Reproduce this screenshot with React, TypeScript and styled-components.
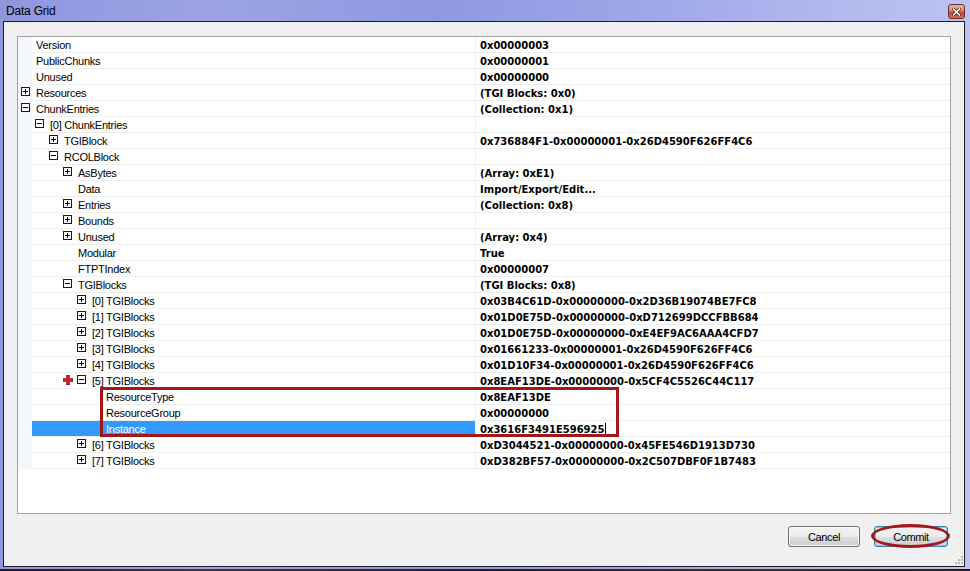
import React from 'react';
import styled, { createGlobalStyle } from 'styled-components';

const GlobalStyle = createGlobalStyle`
  html, body { margin: 0; padding: 0; background: #262626; overflow: hidden; }
  #root { width: 970px; height: 571px; }
  * { box-sizing: border-box; }
`;

const Page = styled.div`
  width: 970px;
  height: 571px;
  display: flex;
  flex-direction: column;
`;

const Window = styled.div`
  height: 569px;
  flex: none;
  display: flex;
  flex-direction: column;
  background: linear-gradient(to right, #8e97de 0%, #9ca4e5 22%, #8f99e0 45%, #9da6e8 65%, #b0b8ee 85%, #bcc3f1 100%);
`;

const TitleBar = styled.div`
  height: 21px;
  flex: none;
  display: flex;
  align-items: center;
  justify-content: space-between;
  padding: 0 5px 0 6px;
`;

const Title = styled.span`
  font-family: "Liberation Sans", Arial, sans-serif;
  font-size: 12px;
  letter-spacing: -0.2px;
  color: #000;
`;

const CloseButton = styled.div`
  width: 17px;
  height: 15px;
  margin-top: 2px;
  border: 1px solid #6b3330;
  border-radius: 3px;
  background: linear-gradient(#eab0a0 0%, #dc8a72 45%, #c9452c 55%, #d56a4b 100%);
  display: flex;
  align-items: center;
  justify-content: center;
`;

const Client = styled.div`
  flex: 1;
  margin: 0 5px 2px 3px;
  border: 1px solid #1c1c1c;
  background: #f0f0f0;
  display: flex;
  flex-direction: column;
  padding: 14px 13px 0 13px;
  position: relative;
`;

const GridBox = styled.div`
  height: 478px;
  flex: none;
  border: 1px solid #a0a0a0;
  background: #fff;
  position: relative;
  display: flex;
  flex-direction: column;
`;

const Row = styled.div`
  height: 16px;
  display: flex;
  flex: none;
`;

const Gutter = styled.div`
  width: 14px;
  flex: none;
  background: #f4f7fc;
  padding: 2px 0 0 3px;
`;

const NameCell = styled.div<{ $pad: number; $selected?: boolean }>`
  width: 444px;
  flex: none;
  display: flex;
  align-items: flex-start;
  padding: 2px 0 0 ${(p) => p.$pad}px;
  border-right: 1px solid #f0f0f0;
  border-bottom: 1px solid #f0f0f0;
  background: ${(p) => (p.$selected ? '#3399ff' : '#fff')};
  color: ${(p) => (p.$selected ? '#fff' : '#000')};
  font-family: "Liberation Sans", Arial, sans-serif;
  font-size: 11px;
  letter-spacing: -0.25px;
  line-height: 13px;
  white-space: nowrap;
`;

const ExpanderBox = styled.svg`
  flex: none;
  display: block;
  margin-right: 6px;
`;

const ValueCell = styled.div`
  flex: 1;
  display: flex;
  align-items: flex-start;
  padding: 2px 0 0 4px;
  border-bottom: 1px solid #f0f0f0;
  font-family: "DejaVu Sans", Verdana, sans-serif;
  font-weight: bold;
  font-size: 10px;
  line-height: 13px;
  color: #000;
  white-space: nowrap;
`;

const Caret = styled.span`
  display: inline-block;
  width: 1px;
  height: 13px;
  margin-left: 1px;
  background: #000;
`;

const HighlightBox = styled.div`
  position: absolute;
  left: 82px;
  top: 350px;
  width: 519px;
  height: 50px;
  border: 3px solid #a3171b;
  pointer-events: none;
`;

const RedPlus = styled.svg`
  position: absolute;
  left: 45px;
  top: 338px;
`;

const ButtonRow = styled.div`
  display: flex;
  justify-content: flex-end;
  gap: 14px;
  margin-top: 12px;
  padding-right: 3px;
`;

const ButtonWrap = styled.div`
  position: relative;
`;

const Button = styled.div<{ $width: number; $default?: boolean }>`
  width: ${(p) => p.$width}px;
  height: 21px;
  border: 1px solid ${(p) => (p.$default ? '#3c7fb1' : '#707070')};
  border-radius: 3px;
  background: linear-gradient(#f2f2f2 0%, #ebebeb 50%, #dddddd 51%, #cfcfcf 100%);
  box-shadow: inset 0 0 0 1px ${(p) => (p.$default ? '#5fd4f4' : 'rgba(255,255,255,0.75)')};
  display: flex;
  align-items: center;
  justify-content: center;
  font-family: "Liberation Sans", Arial, sans-serif;
  font-size: 11px;
  letter-spacing: -0.4px;
  color: #000;
`;

const Ellipse = styled.div`
  position: absolute;
  left: -3px;
  right: -2px;
  top: -2px;
  bottom: -1px;
  border: 3px solid #a3171b;
  border-radius: 50%;
  pointer-events: none;
`;

const Grip = styled.svg`
  position: absolute;
  right: 1px;
  bottom: 2px;
`;

const DesktopStrip = styled.div`
  flex: 1;
  background: linear-gradient(to right, #1d1d1d, #3a3a3a 20%, #202020 50%, #353535 80%, #1d1d1d);
`;

type RowData = {
  n: string;
  v: string;
  l: number;
  e?: '+' | '-';
  selected?: boolean;
};

const rows: RowData[] = [
  { n: 'Version', v: '0x00000003', l: 0 },
  { n: 'PublicChunks', v: '0x00000001', l: 0 },
  { n: 'Unused', v: '0x00000000', l: 0 },
  { n: 'Resources', v: '(TGI Blocks: 0x0)', l: 0, e: '+' },
  { n: 'ChunkEntries', v: '(Collection: 0x1)', l: 0, e: '-' },
  { n: '[0] ChunkEntries', v: '', l: 1, e: '-' },
  { n: 'TGIBlock', v: '0x736884F1-0x00000001-0x26D4590F626FF4C6', l: 2, e: '+' },
  { n: 'RCOLBlock', v: '', l: 2, e: '-' },
  { n: 'AsBytes', v: '(Array: 0xE1)', l: 3, e: '+' },
  { n: 'Data', v: 'Import/Export/Edit...', l: 3 },
  { n: 'Entries', v: '(Collection: 0x8)', l: 3, e: '+' },
  { n: 'Bounds', v: '', l: 3, e: '+' },
  { n: 'Unused', v: '(Array: 0x4)', l: 3, e: '+' },
  { n: 'Modular', v: 'True', l: 3 },
  { n: 'FTPTIndex', v: '0x00000007', l: 3 },
  { n: 'TGIBlocks', v: '(TGI Blocks: 0x8)', l: 3, e: '-' },
  { n: '[0] TGIBlocks', v: '0x03B4C61D-0x00000000-0x2D36B19074BE7FC8', l: 4, e: '+' },
  { n: '[1] TGIBlocks', v: '0x01D0E75D-0x00000000-0xD712699DCCFBB684', l: 4, e: '+' },
  { n: '[2] TGIBlocks', v: '0x01D0E75D-0x00000000-0xE4EF9AC6AAA4CFD7', l: 4, e: '+' },
  { n: '[3] TGIBlocks', v: '0x01661233-0x00000001-0x26D4590F626FF4C6', l: 4, e: '+' },
  { n: '[4] TGIBlocks', v: '0x01D10F34-0x00000001-0x26D4590F626FF4C6', l: 4, e: '+' },
  { n: '[5] TGIBlocks', v: '0x8EAF13DE-0x00000000-0x5CF4C5526C44C117', l: 4, e: '-' },
  { n: 'ResourceType', v: '0x8EAF13DE', l: 5 },
  { n: 'ResourceGroup', v: '0x00000000', l: 5 },
  { n: 'Instance', v: '0x3616F3491E596925', l: 5, selected: true },
  { n: '[6] TGIBlocks', v: '0xD3044521-0x00000000-0x45FE546D1913D730', l: 4, e: '+' },
  { n: '[7] TGIBlocks', v: '0xD382BF57-0x00000000-0x2C507DBF0F1B7483', l: 4, e: '+' },
];

const Expander: React.FC<{ kind: '+' | '-' }> = ({ kind }) => (
  <ExpanderBox width="9" height="9" viewBox="0 0 9 9">
    <rect x="0.5" y="0.5" width="8" height="8" fill="#fff" stroke="#1a1a1a" />
    <path d="M2 4.5h5" stroke="#000" />
    {kind === '+' && <path d="M4.5 2v5" stroke="#000" />}
  </ExpanderBox>
);

const PropertyRow: React.FC<{ r: RowData }> = ({ r }) => {
  const inGutter = r.e && r.l === 0;
  const pad = r.e ? (r.l === 0 ? 4 : 14 * r.l - 11) : 4 + 14 * r.l;
  return (
    <Row>
      <Gutter>{inGutter && <Expander kind={r.e!} />}</Gutter>
      <NameCell $pad={pad} $selected={r.selected}>
        {r.e && r.l > 0 && <Expander kind={r.e} />}
        <span>{r.n}</span>
      </NameCell>
      <ValueCell>
        <span>{r.v}</span>
        {r.selected && <Caret />}
      </ValueCell>
    </Row>
  );
};

export default function App() {
  return (
    <Page>
      <GlobalStyle />
      <Window>
        <TitleBar>
          <Title>Data Grid</Title>
          <CloseButton>
            <svg width="9" height="8" viewBox="0 0 9 8">
              <path d="M1.5 1l6 6M7.5 1l-6 6" stroke="#3a1a1a" strokeWidth="3" strokeLinecap="square" />
              <path d="M1.5 1l6 6M7.5 1l-6 6" stroke="#fff" strokeWidth="1.6" strokeLinecap="square" />
            </svg>
          </CloseButton>
        </TitleBar>
        <Client>
          <GridBox>
            {rows.map((r, i) => (
              <PropertyRow key={i} r={r} />
            ))}
            <HighlightBox />
            <RedPlus width="10" height="10" viewBox="0 0 10 10">
              <path d="M3.5 0h3v3.5h3.5v3h-3.5v3.5h-3v-3.5h-3.5v-3h3.5z" fill="#d11a1f" stroke="#8e1014" strokeWidth="0.6" />
            </RedPlus>
          </GridBox>
          <ButtonRow>
            <ButtonWrap>
              <Button $width={72}>Cancel</Button>
            </ButtonWrap>
            <ButtonWrap>
              <Button $width={74} $default>Commit</Button>
              <Ellipse />
            </ButtonWrap>
          </ButtonRow>
          <Grip width="9" height="9" viewBox="0 0 9 9">
            {[
              [7, 1], [4, 4], [7, 4], [1, 7], [4, 7], [7, 7],
            ].map(([x, y], i) => (
              <rect key={i} x={x} y={y} width="2" height="2" fill="#b8b8b8" />
            ))}
          </Grip>
        </Client>
      </Window>
      <DesktopStrip />
    </Page>
  );
}
